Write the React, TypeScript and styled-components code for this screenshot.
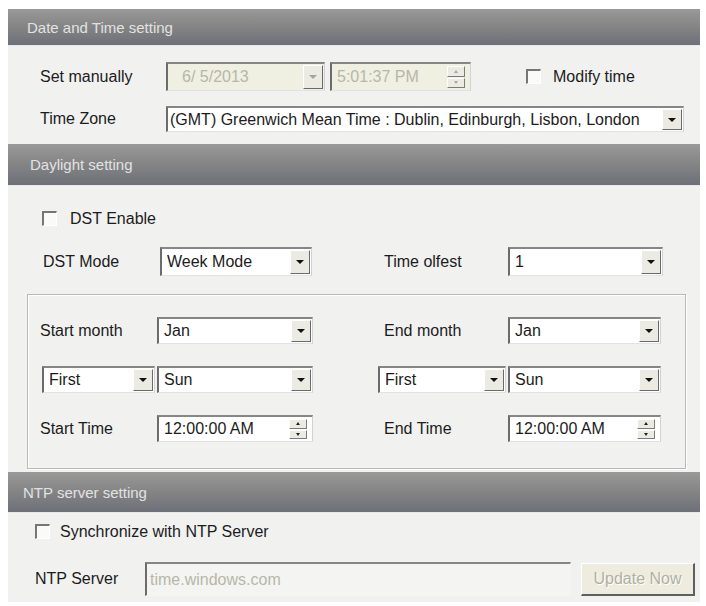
import React from "react";
import styled, { createGlobalStyle } from "styled-components";

const GlobalStyle = createGlobalStyle`
  html, body { margin: 0; padding: 0; background: #fff; }
  body {
    font-family: "Liberation Sans", Arial, sans-serif;
    font-size: 16px;
    color: #1c1c1c;
  }
`;

const Panel = styled.div`
  width: 692px;
  margin: 9px 0 0 8px;
  background: #f1f1f0;
  padding-bottom: 6px;
`;

const SectionHeader = styled.div<{ $h: number; $inset: number }>`
  box-sizing: border-box;
  height: ${(p) => p.$h}px;
  display: flex;
  align-items: center;
  padding-left: ${(p) => p.$inset}px;
  background: linear-gradient(to bottom, #999 0%, #868686 45%, #6e7079 100%);
  border-bottom: 1px solid #e8e8ea;
  color: #e2e2e2;
  font-size: 15px;
`;

/* ---------- date & time section ---------- */

const DateBody = styled.div`
  display: flex;
  flex-direction: column;
  gap: 15px;
  padding: 16px 0 12px 32px;
`;

const Row = styled.div<{ $h: number }>`
  display: flex;
  align-items: center;
  height: ${(p) => p.$h}px;
`;

const Label = styled.span<{ $w?: number; $indent?: number }>`
  flex: none;
  width: ${(p) => (p.$w ? `${p.$w}px` : "auto")};
  padding-left: ${(p) => p.$indent ?? 0}px;
  white-space: nowrap;
`;

/* ---------- form controls (classic sunken look) ---------- */

const Field = styled.div<{ $w: number; $h: number; $disabled?: boolean; $gap?: number; $flat?: boolean }>`
  box-sizing: border-box;
  flex: none;
  width: ${(p) => p.$w}px;
  height: ${(p) => p.$h}px;
  margin-left: ${(p) => p.$gap ?? 0}px;
  display: flex;
  align-items: center;
  background: ${(p) => (p.$disabled ? "#efefe2" : p.$flat ? "#f4f4f3" : "#fff")};
  border-top: 2px solid #868686;
  border-left: 2px solid #6c6c6c;
  border-right: 1px solid ${(p) => (p.$flat ? "transparent" : "#d2d2d2")};
  border-bottom: 1px solid ${(p) => (p.$flat ? "transparent" : "#e2e2e2")};
`;

const FieldText = styled.span<{ $indent: number; $muted?: boolean }>`
  flex: 1;
  min-width: 0;
  padding-left: ${(p) => p.$indent}px;
  color: ${(p) => (p.$muted ? "#b7b7a8" : "#1c1c1c")};
  white-space: nowrap;
  overflow: hidden;
`;

const DropButton = styled.span<{ $disabled?: boolean }>`
  box-sizing: border-box;
  flex: none;
  width: 20px;
  align-self: stretch;
  margin: 1px 1px 1px 0;
  display: flex;
  align-items: center;
  justify-content: center;
  background: #ecebe3;
  border-top: 1px solid #fff;
  border-left: 1px solid #fff;
  border-right: 1px solid #6a6a6a;
  border-bottom: 1px solid #6a6a6a;
  &::after {
    content: "";
    border-left: 4px solid transparent;
    border-right: 4px solid transparent;
    border-top: 4px solid ${(p) => (p.$disabled ? "#a5a59a" : "#111")};
  }
`;

const Spin = styled.span`
  flex: none;
  width: 18px;
  align-self: stretch;
  margin: 2px 5px 2px 0;
  display: flex;
  flex-direction: column;
  gap: 1px;
`;

const SpinHalf = styled.span<{ $up?: boolean; $disabled?: boolean }>`
  box-sizing: border-box;
  flex: 1;
  display: flex;
  align-items: center;
  justify-content: center;
  background: #ecebe3;
  border-top: 1px solid #fff;
  border-left: 1px solid #fff;
  border-right: 1px solid #7c7c7c;
  border-bottom: 1px solid #7c7c7c;
  &::after {
    content: "";
    border-left: 2px solid transparent;
    border-right: 2px solid transparent;
    ${(p) => (p.$up ? "border-bottom" : "border-top")}: 3px solid
      ${(p) => (p.$disabled ? "#a5a59a" : "#222")};
  }
`;

const CheckRow = styled.label<{ $indent: number; $gap: number }>`
  display: flex;
  align-items: center;
  gap: ${(p) => p.$gap}px;
  padding-left: ${(p) => p.$indent}px;
  height: 15px;
  white-space: nowrap;
`;

const CheckBox = styled.span`
  box-sizing: border-box;
  flex: none;
  width: 15px;
  height: 15px;
  background: #fafafa;
  border-top: 2px solid #767676;
  border-left: 2px solid #767676;
  border-right: 1px solid #fff;
  border-bottom: 1px solid #fff;
`;

/* ---------- daylight section ---------- */

const DaylightBody = styled.div`
  padding: 25px 0 3px 0;
`;

const FormGrid = styled.div<{ $cols: string; $rowH: number; $rowGap: number; $top: number; $left: number }>`
  display: grid;
  grid-template-columns: ${(p) => p.$cols};
  grid-auto-rows: ${(p) => p.$rowH}px;
  row-gap: ${(p) => p.$rowGap}px;
  align-items: center;
  margin-top: ${(p) => p.$top}px;
  padding-left: ${(p) => p.$left}px;
`;

const Cell = styled.div<{ $col: number; $shift?: number }>`
  grid-column: ${(p) => p.$col};
  display: flex;
  height: 100%;
  align-items: center;
  margin-left: ${(p) => p.$shift ?? 0}px;
`;

const GroupBox = styled.div`
  box-sizing: border-box;
  width: 659px;
  height: 175px;
  margin: 18px 0 0 19px;
  border: 1px solid #b9b9b9;
  box-shadow: inset 1px 1px 0 #fff, 1px 1px 0 #fff;
  padding-top: 22px;
`;

/* ---------- NTP section ---------- */

const NtpBody = styled.div`
  display: flex;
  flex-direction: column;
  gap: 23px;
  padding: 11px 0 0 27px;
`;

const PushButton = styled.button`
  box-sizing: border-box;
  flex: none;
  width: 114px;
  height: 33px;
  margin-left: 10px;
  padding: 0;
  font: inherit;
  font-size: 16px;
  color: #b0b0a0;
  text-shadow: 1px 1px 0 #fff;
  background: #edecdf;
  border-top: 1px solid #fff;
  border-left: 1px solid #fff;
  border-right: 2px solid #5f5f5f;
  border-bottom: 2px solid #5f5f5f;
`;

type SelectProps = { w: number; h: number; value: string; indent?: number };

const Select = ({ w, h, value, indent = 5 }: SelectProps) => (
  <Field $w={w} $h={h}>
    <FieldText $indent={indent}>{value}</FieldText>
    <DropButton />
  </Field>
);

const TimeSpin = ({ w, h, value }: { w: number; h: number; value: string }) => (
  <Field $w={w} $h={h}>
    <FieldText $indent={5}>{value}</FieldText>
    <Spin>
      <SpinHalf $up />
      <SpinHalf />
    </Spin>
  </Field>
);

const gridLeft = "117px 156px 65px 130px 153px";
const gridMode = "120px 152px 72px 124px 155px";

export default function App() {
  return (
    <>
      <GlobalStyle />
      <Panel>
        <SectionHeader $h={37} $inset={19}>Date and Time setting</SectionHeader>
        <DateBody>
          <Row $h={29}>
            <Label $w={126}>Set manually</Label>
            <Field $w={159} $h={29} $disabled>
              <FieldText $indent={14} $muted>6/ 5/2013</FieldText>
              <DropButton $disabled />
            </Field>
            <Field $w={141} $h={29} $disabled $gap={5}>
              <FieldText $indent={5} $muted>5:01:37 PM</FieldText>
              <Spin>
                <SpinHalf $up $disabled />
                <SpinHalf $disabled />
              </Spin>
            </Field>
            <CheckRow $indent={55} $gap={12}>
              <CheckBox />
              Modify time
            </CheckRow>
          </Row>
          <Row $h={26}>
            <Label $w={126}>Time Zone</Label>
            <Select w={518} h={26} indent={2} value="(GMT) Greenwich Mean Time : Dublin, Edinburgh, Lisbon, London" />
          </Row>
        </DateBody>

        <SectionHeader $h={42} $inset={22}>Daylight setting</SectionHeader>
        <DaylightBody>
          <CheckRow $indent={34} $gap={13}>
            <CheckBox />
            DST Enable
          </CheckRow>
          <FormGrid $cols={gridMode} $rowH={29} $rowGap={0} $top={21} $left={32}>
            <Cell $col={1}>
              <Label $indent={3}>DST Mode</Label>
            </Cell>
            <Cell $col={2}>
              <Select w={152} h={29} value="Week Mode" />
            </Cell>
            <Cell $col={4}>
              <Label>Time olfest</Label>
            </Cell>
            <Cell $col={5}>
              <Select w={155} h={29} value="1" />
            </Cell>
          </FormGrid>

          <GroupBox>
            <FormGrid $cols={gridLeft} $rowH={27} $rowGap={22} $top={0} $left={12}>
              <Cell $col={1}>
                <Label>Start month</Label>
              </Cell>
              <Cell $col={2}>
                <Select w={156} h={27} value="Jan" />
              </Cell>
              <Cell $col={4}>
                <Label $indent={6}>End month</Label>
              </Cell>
              <Cell $col={5}>
                <Select w={153} h={27} value="Jan" />
              </Cell>

              <Cell $col={1} $shift={2}>
                <Select w={113} h={27} value="First" />
              </Cell>
              <Cell $col={2}>
                <Select w={156} h={27} value="Sun" />
              </Cell>
              <Cell $col={4}>
                <Select w={128} h={27} value="First" />
              </Cell>
              <Cell $col={5}>
                <Select w={153} h={27} value="Sun" />
              </Cell>

              <Cell $col={1}>
                <Label>Start Time</Label>
              </Cell>
              <Cell $col={2}>
                <TimeSpin w={156} h={27} value="12:00:00 AM" />
              </Cell>
              <Cell $col={4}>
                <Label $indent={6}>End Time</Label>
              </Cell>
              <Cell $col={5}>
                <TimeSpin w={153} h={27} value="12:00:00 AM" />
              </Cell>
            </FormGrid>
          </GroupBox>
        </DaylightBody>

        <SectionHeader $h={41} $inset={15}>NTP server setting</SectionHeader>
        <NtpBody>
          <CheckRow $indent={0} $gap={10}>
            <CheckBox />
            Synchronize with NTP Server
          </CheckRow>
          <Row $h={34}>
            <Label $w={110}>NTP Server</Label>
            <Field $w={426} $h={34} $flat>
              <FieldText $indent={3} $muted>time.windows.com</FieldText>
            </Field>
            <PushButton disabled>Update Now</PushButton>
          </Row>
        </NtpBody>
      </Panel>
    </>
  );
}
